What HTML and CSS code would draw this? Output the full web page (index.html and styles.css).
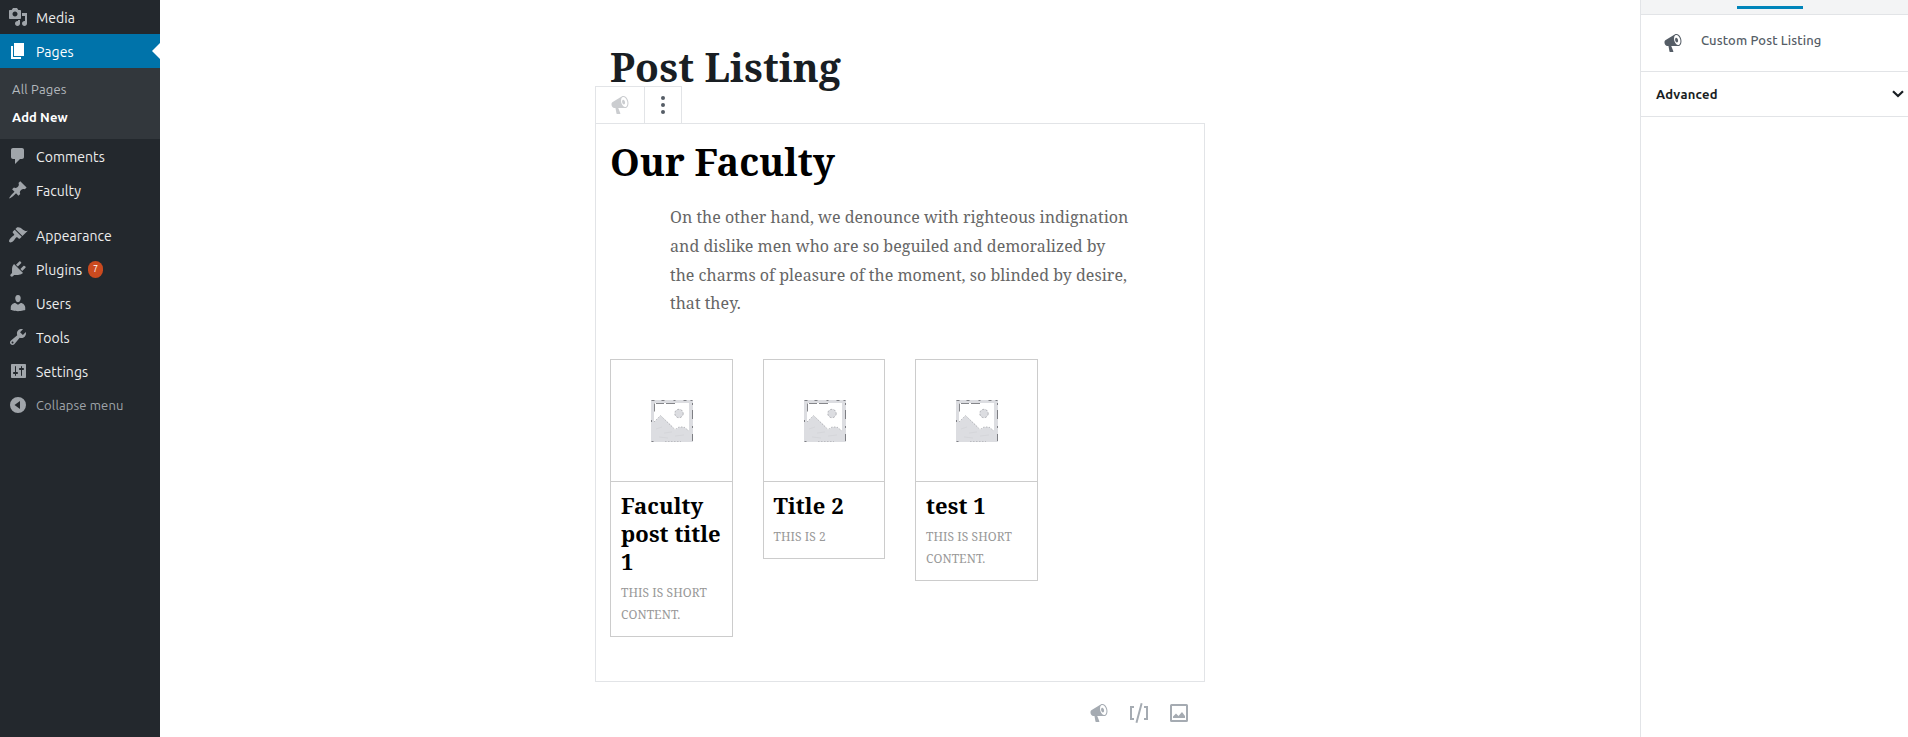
FILE: index.html
```
<!DOCTYPE html>
<html lang="en">
<head>
<meta charset="utf-8">
<title>Edit Page</title>
<link rel="stylesheet" href="styles.css">
</head>
<body>
<svg class="defs" width="0" height="0" aria-hidden="true">
  <symbol id="megaphone" viewBox="0 0 20 20"><path d="M18.15 5.94c.46 1.62.38 3.22-.02 4.48-.42 1.28-1.26 2.18-2.3 2.48-.16.06-.26.06-.4.06-.06.02-.12.02-.18.02-.06.02-.14.02-.22.02h-6.8l2.22 5.5c.02.14-.06.26-.14.34-.08.1-.24.16-.34.16H6.95c-.1 0-.26-.06-.34-.16-.08-.08-.16-.2-.14-.34l-1-5.5H4.25l-.02-.02c-.5.06-1.08-.18-1.54-.62s-.88-1.08-1.06-1.88c-.24-.8-.2-1.56-.02-2.2.18-.62.58-1.08 1.06-1.3l.02-.02 9-5.4c.1-.06.18-.1.24-.16.06-.04.14-.08.24-.12.16-.08.28-.12.5-.18 1.04-.3 2.24.1 3.22.98s1.84 2.24 2.26 3.86zm-2.58 5.98h-.02c.4-.1.74-.34 1.04-.7.58-.7.86-1.76.86-3.04 0-.64-.1-1.3-.28-1.98-.34-1.36-1.02-2.5-1.78-3.24s-1.68-1.1-2.46-.88c-.82.22-1.4.96-1.7 2-.32 1.04-.28 2.36.06 3.72.38 1.36 1 2.5 1.8 3.24.78.74 1.62 1.1 2.48.88zm-2.54-7.08c.22-.04.42-.02.62.04.38.16.76.48 1.02 1s.42 1.2.42 1.78c0 .3-.04.56-.12.8-.18.48-.44.84-.86.94-.34.1-.8-.06-1.14-.4s-.64-.86-.78-1.5c-.18-.62-.12-1.24.02-1.72s.48-.84.82-.94z"/></symbol>
  <symbol id="placeholder" viewBox="0 0 42 42">
    <path fill="#dcdde1" fill-rule="evenodd" d="M0 0h42v42H0zM3 3v19l6.500-6.500L20 25l4 5 4-3h5l5 4V3z"/>
    <circle cx="28" cy="13.500" r="4.200" fill="#dcdde1" stroke="#97989d" stroke-width=".7" stroke-dasharray="2 1.500"/>
    <path fill="none" stroke="#66676c" stroke-width=".8" d="M.5.500h3m7 0h3m9 0h2m8 0h3m4 0h2M3.500 3.500v8M5 3.500h8m2 0h9M41.500 3v2m0 5v9m0 7v2m0 6v7M.5 20v2m0 19.500h2"/>
    <path fill="none" stroke="#a2a3a8" stroke-width=".7" stroke-dasharray="1.500 1.500" d="M3 22l6.500-6.500L24 29.500l4-2.500h5l5 4M14 41.700h16"/>
    <path fill="none" stroke="#d5d6da" stroke-width="1" d="M5 29l6-2m2 6l8-1m3 4l9-1M8 37l9 1"/>
  </symbol>
</svg>
<div class="app">
  <nav class="menu">
    <a class="item"><svg class="ico" viewBox="0 0 20 20"><path d="M13 11V4c0-.55-.45-1-1-1h-1.670L9 1H5L3.670 3H2c-.55 0-1 .45-1 1v7c0 .55.45 1 1 1h10c.55 0 1-.45 1-1zM7 4.500c1.380 0 2.500 1.120 2.500 2.500S8.380 9.500 7 9.500 4.500 8.380 4.500 7 5.620 4.500 7 4.500zM14 6h5v10.500c0 1.380-1.120 2.500-2.500 2.500S14 17.880 14 16.500s1.120-2.500 2.500-2.500c.17 0 .34.02.5.05V9h-3V6zm-4 8.050V13h2v3.500c0 1.380-1.120 2.500-2.500 2.500S7 17.880 7 16.500 8.120 14 9.500 14c.17 0 .34.02.5.05z"/></svg>Media</a>
    <a class="item current"><svg class="ico" viewBox="0 0 20 20"><path d="M6 15V2h10v13H6zm-1 1h8v2H3V5h2v11z"/></svg>Pages</a>
    <div class="submenu"><a>All Pages</a><a class="on">Add New</a></div>
    <a class="item"><svg class="ico" viewBox="0 0 20 20"><path d="M5 2h9c1.100 0 2 .9 2 2v7c0 1.100-.9 2-2 2h-2l-5 5v-5H5c-1.100 0-2-.9-2-2V4c0-1.100.9-2 2-2z"/></svg>Comments</a>
    <a class="item"><svg class="ico" viewBox="0 0 20 20"><path d="M10.440 3.020l1.820-1.820 6.360 6.350-1.830 1.820c-1.050-.68-2.480-.57-3.410.36l-.75.75c-.92.93-1.040 2.350-.35 3.410l-1.830 1.820-2.410-2.410-2.800 2.790c-.42.42-3.380 2.710-3.800 2.290s1.860-3.390 2.280-3.810l2.790-2.790L4.100 9.360l1.830-1.820c1.050.69 2.480.57 3.400-.36l.75-.75c.93-.92 1.050-2.350.36-3.410z"/></svg>Faculty</a>
    <a class="item gap"><svg class="ico" viewBox="0 0 20 20"><path d="M14.480 11.060L7.410 3.990l1.500-1.500c.5-.56 2.300-.47 3.510.32 1.210.8 1.430 1.280 2.910 2.100 1.180.64 2.450 1.260 4.450.85zm-.71.71L6.700 4.700 4.930 6.470c-.39.39-.39 1.020 0 1.410l1.060 1.060c.39.39.39 1.030 0 1.420-.6.6-1.430 1.110-2.210 1.690-.35.26-.7.53-1.010.84C1.430 14.230.4 16.080 1.400 17.070c.99 1 2.840-.03 4.180-1.360.31-.31.58-.66.85-1.020.57-.78 1.080-1.610 1.690-2.210.39-.39 1.020-.39 1.410 0l1.060 1.060c.39.39 1.020.39 1.410 0z"/></svg>Appearance</a>
    <a class="item"><svg class="ico" viewBox="0 0 20 20"><path d="M13.110 4.360L9.870 7.600 8 5.730l3.240-3.240c.35-.34 1.050-.2 1.560.32.52.51.66 1.210.31 1.550zm-8 1.770l.91-1.120 9.010 9.010-1.190.84c-.71.71-2.630 1.160-3.820 1.160H6.140L4.900 17.260c-.59.59-1.540.59-2.120 0-.59-.58-.59-1.530 0-2.120l1.240-1.240v-3.880c0-1.130.4-3.190 1.090-3.890zm7.260 3.970l3.240-3.240c.34-.35 1.040-.21 1.550.31.52.51.66 1.210.31 1.550l-3.240 3.250z"/></svg>Plugins<span class="badge">7</span></a>
    <a class="item"><svg class="ico" viewBox="0 0 20 20"><path d="M10 9.250c-2.270 0-2.730-3.440-2.730-3.440C7 4.020 7.820 2 9.970 2c2.160 0 2.980 2.020 2.710 3.810 0 0-.41 3.440-2.680 3.440zm0 2.570L12.720 10c2.390 0 4.520 2.330 4.520 4.530v2.490s-3.650 1.130-7.240 1.130c-3.650 0-7.240-1.130-7.240-1.130v-2.490c0-2.250 1.940-4.480 4.470-4.480z"/></svg>Users</a>
    <a class="item"><svg class="ico" viewBox="0 0 20 20"><path d="M16.680 9.770c-1.340 1.340-3.300 1.670-4.950.99l-5.410 6.520c-.99.99-2.590.99-3.580 0s-.99-2.590 0-3.570l6.520-5.420c-.68-1.650-.35-3.610.99-4.950 1.280-1.280 3.120-1.620 4.720-1.060l-2.890 2.890 2.820 2.820 2.860-2.870c.53 1.580.18 3.390-1.080 4.650zM3.810 16.210c.4.39 1.040.39 1.430 0 .4-.4.4-1.040 0-1.430-.39-.4-1.030-.4-1.430 0-.39.39-.39 1.030 0 1.430z"/></svg>Tools</a>
    <a class="item"><svg class="ico" viewBox="0 0 20 20"><path d="M18 16V4c0-.55-.45-1-1-1H4c-.55 0-1 .45-1 1v12c0 .55.45 1 1 1h13c.55 0 1-.45 1-1zM8 11h1c.55 0 1 .45 1 1s-.45 1-1 1H8v1.500c0 .28-.22.5-.5.5s-.5-.22-.5-.5V13H6c-.55 0-1-.45-1-1s.45-1 1-1h1V5.500c0-.28.22-.5.5-.5s.5.22.5.5V11zm5-2h-1c-.55 0-1-.45-1-1s.45-1 1-1h1V5.500c0-.28.22-.5.5-.5s.5.22.5.5V7h1c.55 0 1 .45 1 1s-.45 1-1 1h-1v5.500c0 .28-.22.5-.5.5s-.5-.22-.5-.5V9z"/></svg>Settings</a>
    <a class="item collapse"><svg class="ico" viewBox="0 0 20 20"><path fill-rule="evenodd" d="M10 2a8 8 0 1 1 0 16a8 8 0 1 1 0-16zM12 6v8l-5.500-4z"/></svg>Collapse menu</a>
  </nav>

  <main class="editor">
    <h1 class="post-title">Post Listing</h1>
    <div class="toolbar">
      <span class="tool type"><svg class="ico"><use href="#megaphone"/></svg></span>
      <span class="tool more"><svg viewBox="0 0 20 20"><circle cx="10" cy="3" r="2"/><circle cx="10" cy="10" r="2"/><circle cx="10" cy="17" r="2"/></svg></span>
    </div>
    <section class="block">
      <h2 class="heading">Our Faculty</h2>
      <p class="intro">On the other hand, we denounce with righteous indignation and dislike men who are so beguiled and demoralized by the charms of pleasure of the moment, so blinded by desire, that they.</p>
      <div class="cards">
        <article class="card"><div class="thumb"><svg><use href="#placeholder"/></svg></div><div class="body"><h3>Faculty post title 1</h3><p>This is short content.</p></div></article>
        <article class="card"><div class="thumb"><svg><use href="#placeholder"/></svg></div><div class="body"><h3>Title 2</h3><p>This is 2</p></div></article>
        <article class="card"><div class="thumb"><svg><use href="#placeholder"/></svg></div><div class="body"><h3>test 1</h3><p>This is short content.</p></div></article>
      </div>
    </section>
    <div class="inserter">
      <svg class="ico"><use href="#megaphone"/></svg>
      <svg viewBox="0 0 24 24"><path d="M8.500 21.400l1.900.5 5.200-19.300-1.900-.5-5.200 19.300zM3 19h4v-2H5V7h2V5H3v14zM17 5v2h2v10h-2v2h4V5h-4z"/></svg>
      <svg viewBox="0 0 24 24"><path fill-rule="evenodd" d="M4.500 3h15A1.500 1.500 0 0 1 21 4.500v15a1.500 1.500 0 0 1-1.500 1.500h-15A1.500 1.500 0 0 1 3 19.500v-15A1.500 1.500 0 0 1 4.500 3zM5 5v14h14V5z"/><path d="M6 17v-1.500l3-3 2.500 2.500L15 11l3 4v2z"/></svg>
    </div>
  </main>

  <aside class="panel">
    <div class="tabs"><span class="marker"></span></div>
    <div class="info"><svg class="ico"><use href="#megaphone"/></svg><span>Custom Post Listing</span></div>
    <div class="advanced"><span>Advanced</span><svg viewBox="0 0 12 8"><path d="M1 1.200l5 4.800 5-4.800" fill="none" stroke="currentColor" stroke-width="2.200"/></svg></div>
  </aside>
</div>
</body>
</html>
```
FILE: styles.css
```
* { box-sizing: border-box; }
body { margin: 0; background: #fff; font-family: Ubuntu, "Open Sans", sans-serif; font-size: 13px; }
h1, h2, h3, p { margin: 0; }
svg { display: block; fill: currentColor; }
.defs { position: absolute; }
.ico { width: 20px; height: 20px; flex: none; }
.app { display: flex; height: 737px; overflow: hidden; }

.menu { width: 160px; flex: none; background: #23282d; }
.item { display: flex; height: 34px; padding: 7px 0 0 8px; gap: 8px; position: relative; color: #eee; font-size: 14px; line-height: 22px; letter-spacing: .08px; }
.item .ico { color: #a0a5aa; }
.item.current { background: #0073aa; color: #fff; }
.item.current .ico { color: #fff; }
.item.current::after { content: ""; position: absolute; right: 0; top: 9px; border: 8px solid transparent; border-right-color: #fff; border-left: 0; }
.item.gap { margin-top: 11px; }
.item.collapse { color: #a0a5aa; font-size: 13px; line-height: 20px; letter-spacing: .14px; }
.submenu { height: 71px; padding: 7px 12px; background: #32373c; color: #b4b9be; letter-spacing: .2px; }
.submenu a { display: block; height: 28px; line-height: 29px; }
.submenu .on { color: #fff; font-weight: 700; letter-spacing: .1px; }
.badge { width: 15px; height: 17px; margin: 2px 0 0 -2px; border-radius: 9px; background: #ca4a1f; color: #fff; font-size: 9px; line-height: 17px; text-align: center; }

.editor { flex: 1; display: flex; flex-direction: column; align-items: center; padding-top: 40px; font-family: "Noto Serif", "DejaVu Serif Condensed", serif; }
.editor > * { width: 610px; flex: none; }
.post-title { height: 46px; padding-left: 15px; color: #191e23; font-size: 39px; line-height: 54px; letter-spacing: .18px; white-space: nowrap; }
.toolbar { position: relative; display: flex; height: 37px; }
.tool { display: flex; align-items: center; justify-content: center; border: solid #e2e4e7; border-width: 1px 1px 0 0; background: #fff; }
.type { width: 50px; border-left-width: 1px; color: #cbcdd0; }
.more { width: 37px; color: #555d66; }
.more svg { width: 20px; height: 20px; }
.block { height: 559px; padding: 11px 14px; border: 1px solid #e2e4e7; color: #000; }
.heading { font-size: 37.8px; line-height: 54px; }
.intro { margin: 14px 60px 0; color: #666; font-size: 16px; line-height: 28.8px; letter-spacing: .025px; }
.cards { display: grid; grid-template-columns: repeat(4, 1fr); gap: 30px; align-items: start; margin-top: 40.8px; }
.card { border: 1px solid #ccc; }
.thumb { display: flex; align-items: center; justify-content: center; height: 122px; padding: 2px 0 0 2px; border-bottom: 1px solid #ccc; }
.thumb svg { width: 42px; height: 42px; }
.body { padding: 9px 0 10px 10px; }
.body h3 { font-size: 22px; line-height: 28px; letter-spacing: .1px; }
.body p { margin-top: 7px; color: #999; font-size: 12px; line-height: 22px; letter-spacing: .08px; text-transform: uppercase; }
.inserter { display: flex; justify-content: flex-end; align-items: center; gap: 16px; height: 62px; padding-right: 14px; color: #a5abb2; }
.inserter svg { width: 24px; height: 24px; }
.inserter .ico { width: 20px; height: 20px; margin-right: 2px; }

.panel { width: 268px; flex: none; border-left: 1px solid #e2e4e7; }
.tabs { height: 15px; padding: 6px 0 0 96px; border-bottom: 1px solid #e2e4e7; background: #f3f4f5; }
.marker { display: block; width: 66px; height: 3px; background: #0085ba; }
.info { display: flex; gap: 18px; height: 57px; padding: 18px 0 0 22px; border-bottom: 1px solid #e2e4e7; color: #555d66; font-weight: 500; line-height: 14px; letter-spacing: .13px; }
.advanced { display: flex; justify-content: space-between; align-items: center; height: 45px; padding: 0 4px 0 15px; border-bottom: 1px solid #e2e4e7; color: #191e23; font-weight: 700; letter-spacing: .25px; }
.advanced svg { width: 12px; height: 8px; }
```
